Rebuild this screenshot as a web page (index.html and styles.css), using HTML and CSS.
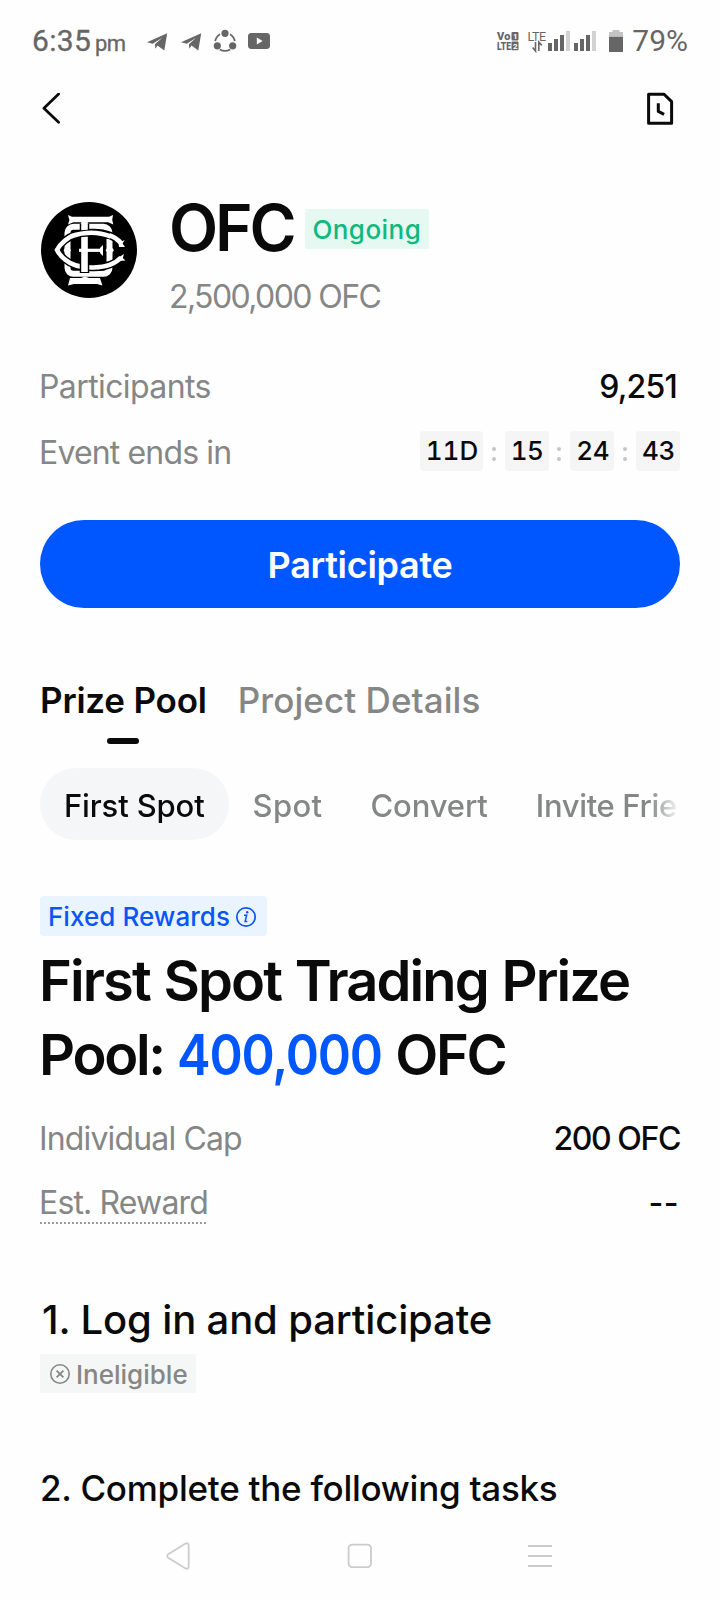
FILE: index.html
```html
<!DOCTYPE html>
<html lang="en">
<head>
<meta charset="utf-8">
<title>OFC</title>
<link rel="stylesheet" href="styles.css">
</head>
<body>
<div class="screen">
  <div class="status">
    <span class="time">6:35</span><span class="ampm">pm</span>
    <svg class="status-left" width="124" height="24" viewBox="146 28 124 24">
      <g fill="#666">
        <path id="plane" d="M147 41.3L167.2 32.2L164.3 49.6L157.5 44.6L155.4 47.8L154.9 43.2L162.2 36.8L152.8 42.8Z"/>
        <use href="#plane" x="34"/>
        <circle cx="225" cy="32.3" r="3.6"/><circle cx="217.3" cy="44.8" r="3.6"/><circle cx="232.7" cy="44.8" r="3.6"/>
        <rect x="248" y="32" width="22" height="16" rx="3.4"/>
      </g>
      <g fill="none" stroke="#666" stroke-width="1.7">
        <path d="M220 33.2A10 10 0 0 0 215.2 40.2M230 33.2A10 10 0 0 1 234.8 40.2M219.8 48.4A10 10 0 0 0 230.2 48.4"/>
      </g>
      <path d="M256.8 36.6L262.6 40L256.8 43.4Z" fill="#fff"/>
    </svg>
    <svg class="status-right" width="128" height="24" viewBox="496 28 128 24">
      <g class="status-mini" fill="#666">
        <text x="497" y="39.4" class="heavy" textLength="13.5">Vo</text>
        <text x="497" y="49.4" class="heavy" textLength="14" lengthAdjust="spacingAndGlyphs">LTE</text>
        <rect x="511.5" y="31" width="7" height="8.6" rx="1"/>
        <rect x="511.5" y="40.6" width="7" height="8.6" rx="1"/>
        <text x="513.1" y="38" class="badge-digit">1</text>
        <text x="513.1" y="47.6" class="badge-digit">2</text>
        <text x="527.5" y="40" class="lte" textLength="18.5">LTE</text>
        <path d="M535.5 41V50L532.6 46.4M538.8 50V41L541.8 44.4" fill="none" stroke="#666" stroke-width="1.6"/>
        <rect x="548" y="42" width="4" height="8"/><rect x="554" y="38" width="4" height="12"/><rect x="560" y="34" width="4" height="16"/>
        <rect x="574" y="42" width="4" height="8"/><rect x="580" y="38" width="4" height="12"/><rect x="586" y="34" width="4" height="16"/>
        <rect x="609" y="35.5" width="14" height="15.5"/>
      </g>
      <g fill="#d2d2d2">
        <rect x="566" y="30" width="4" height="20"/><rect x="592" y="30" width="4" height="20"/>
        <path d="M609 35.5V31H612.5V29H619.5V31H623V35.5Z" fill="#c4c4c4"/>
      </g>
    </svg>
    <span class="percent">79%</span>
  </div>

  <div class="topbar">
    <svg width="20" height="32" viewBox="0 0 20 32"><path d="M16.6 1L1.9 15.2L16.6 29.2" fill="none" stroke="#0a0a0a" stroke-width="2.7" stroke-linecap="round" stroke-linejoin="round"/></svg>
    <svg width="28" height="34" viewBox="0 0 28 34"><path d="M2.6 2.2H18.1L25.6 9.6V31.3H2.6ZM12.3 11.2V19.4L18.1 22.4" fill="none" stroke="#0a0a0a" stroke-width="3" stroke-linejoin="round"/></svg>
  </div>

  <div class="page">
    <div class="hero">
      <svg class="logo" width="96" height="96" viewBox="0 0 96 96">
        <circle cx="48" cy="48" r="48" fill="#000"/>
        <g fill="none" stroke="#fff">
          <rect x="26.5" y="24.8" width="42" height="47" rx="6" stroke-width="6"/>
          <path d="M80 41C69 28 37 27 24 38.5Q18.5 43 16 48Q18.5 53 24 57.5C37 69 69 68 80 55.5" stroke="#000" stroke-width="7.4"/>
          <path d="M80 41C69 28 37 27 24 38.5Q18.5 43 16 48Q18.5 53 24 57.5C37 69 69 68 80 55.5" stroke-width="4.6"/>
          <path d="M43.5 22V71" stroke="#000" stroke-width="9.5"/>
          <path d="M43.5 18V70" stroke-width="6.6"/>
          <path d="M32 33.4C43 30 58 30 68 33.8" stroke="#000" stroke-width="7"/>
          <path d="M30 34.2C43 29.8 58 29.8 70 34.6" stroke-width="4.6"/>
          <path d="M38 48.3H60" stroke-width="3.2"/>
        </g>
        <g fill="#fff">
          <path d="M27 13L31 14.8H68L72 13L71.2 18L72.4 22.4L67 20.2H32.5L27 22.4L28.4 18Z"/>
          <path d="M29 76H40L44 74.5L48 76H59L61.4 83.4L56 82H33L27 83.4Z"/>
          <path d="M59 46L62 43V54L59 51Z"/>
          <path d="M26 43L30 48.2L26 53.5L22.5 48.2ZM69 43L73 48.2L69 53.5L64.5 48.2Z"/>
          <path d="M77.5 41L83.6 38L81.6 41.5L84 45L78 45ZM77.5 55.5L83 52L81.8 56L84.5 58.5L78 59Z"/>
        </g>
      </svg>
      <div class="hero-text">
        <div class="title-line"><h1 class="title">OFC</h1><span class="tag tag-green">Ongoing</span></div>
        <div class="amount">2,500,000 OFC</div>
      </div>
    </div>

    <div class="row"><span class="label tight0">Participants</span><span class="value participants">9,251</span></div>
    <div class="row row-timer">
      <span class="label">Event ends in</span>
      <div class="timer">
        <span class="chip chip-day">11D</span><i class="colon"></i><span class="chip">15</span><i class="colon"></i><span class="chip">24</span><i class="colon"></i><span class="chip">43</span>
      </div>
    </div>

    <div class="button">Participate</div>

    <div class="tabs"><div class="tab active">Prize Pool</div><div class="tab second">Project Details</div></div>

    <div class="pills">
      <span class="pill active">First Spot</span><span class="pill spot">Spot</span><span class="pill convert">Convert</span><span class="pill last">Invite Frie</span>
    </div>

    <div class="tag tag-blue">Fixed Rewards
      <svg width="22" height="22" viewBox="0 0 22 22"><circle cx="11" cy="11" r="9.2" fill="none" stroke="#0a56f5" stroke-width="1.7"/><path d="M9 9.3H11.7L10.1 15.6H12.3" fill="none" stroke="#0a56f5" stroke-width="1.5"/><circle cx="12.2" cy="6.3" r="1.2" fill="#0a56f5"/></svg>
    </div>
    <h2 class="pool">First Spot Trading Prize<br><span class="pool-second">Pool: <span class="pool-sum">400,000</span> OFC</span></h2>

    <div class="row row-cap"><span class="label">Individual Cap</span><span class="value cap">200 OFC</span></div>
    <div class="row row-est"><span class="label dotted">Est. Reward</span><span class="value dashes">--</span></div>

    <h3 class="step step-one">1. Log in and participate</h3>
    <div class="tag tag-gray">
      <svg width="22" height="22" viewBox="0 0 22 22"><circle cx="11" cy="11" r="9.2" fill="none" stroke="#858787" stroke-width="1.6"/><path d="M7.6 7.6L14.4 14.4M14.4 7.6L7.6 14.4" stroke="#858787" stroke-width="1.8"/></svg><span class="tag-text">Ineligible</span>
    </div>
    <h3 class="step step-two">2. Complete the following tasks</h3>
  </div>

  <div class="navbar">
    <svg width="26" height="30" viewBox="0 0 26 30"><path d="M20.5 2.6L3.2 13.2Q1.2 15 3.2 16.8L20.5 27.4Q23.5 28.6 23.7 25.5V4.5Q23.5 1.4 20.5 2.6Z" fill="none" stroke="#cbcbcb" stroke-width="1.8"/></svg>
    <svg width="26" height="26" viewBox="0 0 26 26"><rect x="2.6" y="1.6" width="22.4" height="22.6" rx="3.6" fill="none" stroke="#cbcbcb" stroke-width="1.8"/></svg>
    <svg width="26" height="26" viewBox="0 0 26 26"><path d="M1 3H25M1 13H25M1 23H25" stroke="#cbcbcb" stroke-width="1.9"/></svg>
  </div>
</div>
</body>
</html>
```
FILE: styles.css
```css
* { box-sizing: border-box; }
body { margin: 0; background: #fff; font-family: Inter, "Liberation Sans", sans-serif; color: #0a0a0a; }
h1, h2, h3 { margin: 0; }
svg { display: block; flex: none; }

.screen { width: 720px; height: 1600px; background: #fefefe; overflow: hidden; display: flex; flex-direction: column; }

.status { height: 81px; flex: none; display: flex; align-items: center; padding: 0 32px; color: #666; font-family: Roboto, "Liberation Sans", sans-serif; }
.time { font-size: 30px; line-height: 40px; letter-spacing: 0.3px; width: 59px; -webkit-text-stroke: 0.3px #666; }
.ampm { font-size: 22px; line-height: 40px; margin: 6px 0 0 4px; letter-spacing: -0.6px; width: 31px; -webkit-text-stroke: 0.3px #666; }
.status-left { margin-left: 20px; }
.status-right { margin-left: auto; margin-right: 8px; }
.percent { font-size: 30px; line-height: 40px; }
.status-mini { font-family: Roboto, sans-serif; }
.heavy { font-size: 11px; font-weight: 900; }
.lte { font-size: 12.5px; }
.badge-digit { font-size: 8px; font-weight: 700; fill: #fff; }

.topbar { height: 56px; flex: none; display: flex; align-items: center; justify-content: space-between; padding: 0 46px 0 42px; }

.page { padding: 54px 40px 0; flex: 1; min-height: 0; display: flex; flex-direction: column; align-items: flex-start; }
.hero { display: flex; gap: 32px; padding-left: 1px; height: 126px; }
.logo { margin-top: 11px; }
.title-line { display: flex; align-items: center; height: 74px; }
.title { font-size: 64px; font-weight: 600; line-height: 74px; letter-spacing: -3.2px; }
.amount { font-size: 32px; font-weight: 400; line-height: 40px; margin-top: 12px; letter-spacing: -1.6px; color: #858787; white-space: nowrap; }

.tag { display: flex; align-items: center; height: 40px; line-height: 40px; font-size: 26px; font-weight: 500; border-radius: 4px; white-space: nowrap; }
.tag-green { background: #e5f8f1; color: #0fb97b; letter-spacing: 0.45px; width: 124px; padding-left: 7px; margin: 2px 0 0 12px; padding-top: 2px; border-radius: 2px; }
.tag-blue { background: #eaf4ff; color: #0a56f5; letter-spacing: 0.05px; width: 227px; padding: 2px 0 0 8px; margin-top: 56px; gap: 5px; }
.tag-gray { background: #f5f6f6; color: #858787; width: 156px; height: 39px; padding: 1px 0 0 9px; margin-top: 9px; gap: 5px; border-radius: 2px; }
.tag-text { padding-top: 2px; }

.row { align-self: stretch; height: 40px; display: flex; justify-content: space-between; font-size: 32px; line-height: 40px; margin-top: 50px; white-space: nowrap; }
.label { font-weight: 400; color: #858787; letter-spacing: -0.85px; margin-left: -1px; }
.tight0 { letter-spacing: -0.6px; }
.value { font-weight: 500; }
.participants { letter-spacing: -0.8px; margin-right: 3px; }
.row-timer { margin-top: 24px; }
.row-timer .label { padding-top: 2px; }
.timer { display: flex; }
.chip { width: 44px; height: 40px; border-radius: 4px; background: #f5f5f5; font-size: 26px; font-weight: 500; text-align: center; font-variant-numeric: tabular-nums; letter-spacing: -0.4px; padding-left: 1px; }
.chip-day { width: 63px; letter-spacing: 0; }
.colon { width: 21.7px; display: flex; flex-direction: column; align-items: center; gap: 6px; padding-top: 16px; }
.colon::before, .colon::after { content: ""; width: 4px; height: 4px; border-radius: 50%; background: #c4c6c6; }

.button { align-self: stretch; flex: none; height: 88px; margin-top: 49px; border-radius: 44px; background: #0057ff; color: #fff; font-size: 36px; font-weight: 600; letter-spacing: -0.3px; line-height: 91px; text-align: center; }

.tabs { display: flex; gap: 32px; margin-top: 72px; height: 64px; flex: none; font-size: 35px; line-height: 40px; }
.tab { font-weight: 500; color: #858787; }
.second { letter-spacing: 0.07px; }
.tab.active { font-weight: 600; color: #0a0a0a; letter-spacing: -0.2px; display: flex; flex-direction: column; align-items: center; justify-content: space-between; margin: 0 -1px 0 0; }
.tab.active::after { content: ""; width: 32px; height: 6px; border-radius: 3px; background: #0a0a0a; }

.pills { align-self: stretch; flex: none; display: flex; margin-top: 24px; height: 72px; overflow: hidden; white-space: nowrap; -webkit-mask-image: linear-gradient(90deg, #000 610px, transparent 640px); mask-image: linear-gradient(90deg, #000 610px, transparent 640px); }
.pill { padding: 0 24px; font-size: 31px; font-weight: 500; line-height: 75px; color: #858787; border-radius: 36px; flex: none; }
.pill.active { background: #f4f6f8; color: #0a0a0a; width: 188.5px; padding-right: 0; letter-spacing: -0.15px; }
.spot { letter-spacing: 0.35px; }
.convert { letter-spacing: -0.1px; }
.last { padding: 0 0 0 24px; letter-spacing: -0.35px; }

.pool { font-size: 56px; font-weight: 600; line-height: 74px; margin: 8px 0 0 -1px; letter-spacing: -1.92px; word-spacing: 1.5px; white-space: nowrap; }
.pool-second { letter-spacing: -2.3px; }
.pool-sum { display: inline-block; color: #0057ff; letter-spacing: -1.3px; transform: scaleX(0.9); transform-origin: left; margin: 0 -22.5px 0 -0.5px; }

.row-cap { margin-top: 27px; }
.cap { letter-spacing: -1.4px; }
.row-est { margin-top: 24px; }
.dotted { height: 41px; width: 166px; margin-left: 0; text-indent: -1px; border-bottom: 2px dotted #9b9d9d; flex: none; }
.dashes { letter-spacing: 0.5px; margin-right: 1px; }

.step { font-weight: 500; white-space: nowrap; }
.step-one { font-size: 40px; line-height: 50px; margin-top: 72px; letter-spacing: -0.14px; padding-left: 2px; }
.step-two { font-size: 35px; line-height: 40px; margin-top: 75px; letter-spacing: -0.25px; }

.navbar { height: 88px; flex: none; display: flex; align-items: center; justify-content: space-between; padding: 0 167px 0 165px; }
```
